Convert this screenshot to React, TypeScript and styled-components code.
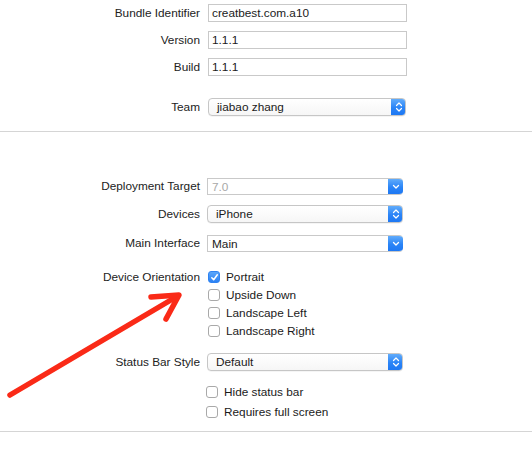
import React from "react";
import styled, { createGlobalStyle } from "styled-components";

const Global = createGlobalStyle`
  html, body { margin: 0; padding: 0; background: #ffffff; }
  body { font-family: "Liberation Sans", Arial, sans-serif; font-size: 11.8px; color: #262626; }
`;

const Page = styled.div`
  position: relative;
  width: 532px;
  height: 451px;
  overflow: hidden;
  background: #fff;
  display: flex;
  flex-direction: column;
`;

const Row = styled.div<{ $mt: number; $h?: number; $indent?: number }>`
  display: flex;
  align-items: flex-start;
  margin-top: ${(p) => p.$mt}px;
  min-height: ${(p) => p.$h ?? 18}px;
  & > *:nth-child(2) { margin-left: ${(p) => p.$indent ?? 8}px; }
`;

const Label = styled.div<{ $h?: number }>`
  width: 200px;
  flex: none;
  text-align: right;
  line-height: ${(p) => p.$h ?? 18}px;
  font-size: 11.8px;
  color: #222222;
  white-space: nowrap;
`;

const Spacer = styled.div`
  width: 200px;
  flex: none;
`;

const TextField = styled.div<{ $w: number }>`
  box-sizing: border-box;
  width: ${(p) => p.$w}px;
  height: 18px;
  border: 1px solid #c9c9c9;
  background: #fff;
  padding-left: 3px;
  line-height: 16px;
  font-size: 11.8px;
  color: #1a1a1a;
`;

const Popup = styled.div<{ $w: number }>`
  box-sizing: border-box;
  width: ${(p) => p.$w}px;
  height: 18px;
  border: 1px solid #c6c6c6;
  border-radius: 4px;
  background: linear-gradient(#ffffff, #f6f6f6);
  display: flex;
  align-items: stretch;
  overflow: hidden;
  box-shadow: 0 0.5px 0.5px rgba(0,0,0,0.08);
`;

const PopupText = styled.div<{ $pad?: number; $dim?: boolean }>`
  flex: 1;
  padding-left: ${(p) => p.$pad ?? 8}px;
  line-height: 16px;
  font-size: 11.8px;
  color: ${(p) => (p.$dim ? "#a8a8a8" : "#1a1a1a")};
`;

const BlueCap = styled.div<{ $w: number }>`
  width: ${(p) => p.$w}px;
  flex: none;
  margin: -1px -1px -1px 0;
  background: linear-gradient(#67b0fb, #2a84f7 55%, #1c76f2);
  display: flex;
  align-items: center;
  justify-content: center;
`;

const Combo = styled.div<{ $w: number }>`
  box-sizing: border-box;
  width: ${(p) => p.$w}px;
  height: 17px;
  border: 1px solid #c9c9c9;
  border-right: none;
  border-radius: 0 4px 4px 0;
  background: #fff;
  display: flex;
  align-items: stretch;
  overflow: hidden;
`;

const Divider = styled.div<{ $mt: number }>`
  margin-top: ${(p) => p.$mt}px;
  height: 1px;
  background: #d5d5d5;
  flex: none;
`;

const CheckList = styled.div<{ $rowH: number }>`
  display: flex;
  flex-direction: column;
  & > * { height: ${(p) => p.$rowH}px; }
`;

const CheckRow = styled.label`
  display: flex;
  align-items: center;
  gap: 6px;
  font-size: 11.8px;
  color: #1a1a1a;
`;

const Box = styled.span<{ $on?: boolean }>`
  box-sizing: border-box;
  width: 12px;
  height: 12px;
  border-radius: 3px;
  border: 1px solid ${(p) => (p.$on ? "#2f83f2" : "#a9a9a9")};
  background: ${(p) => (p.$on ? "linear-gradient(#5aa6fa, #2b81f3)" : "#fff")};
  display: flex;
  align-items: center;
  justify-content: center;
  flex: none;
`;

const ArrowLayer = styled.svg`
  position: absolute;
  left: 0;
  top: 0;
  pointer-events: none;
`;

const UpDown = () => (
  <svg width="8" height="12" viewBox="0 0 8 12">
    <path d="M1.5 4.5 L4 2 L6.5 4.5 M1.5 7.5 L4 10 L6.5 7.5" fill="none" stroke="#fff" strokeWidth="1.2" strokeLinecap="round" strokeLinejoin="round" />
  </svg>
);

const Down = () => (
  <svg width="8" height="6" viewBox="0 0 8 6">
    <path d="M1.5 1.5 L4 4 L6.5 1.5" fill="none" stroke="#fff" strokeWidth="1.3" strokeLinecap="round" strokeLinejoin="round" />
  </svg>
);

const Check = () => (
  <svg width="9" height="9" viewBox="0 0 9 9">
    <path d="M1.8 4.8 L3.7 6.8 L7.3 1.8" fill="none" stroke="#fff" strokeWidth="1.5" strokeLinecap="round" strokeLinejoin="round" />
  </svg>
);

const Cb = ({ on, children }: { on?: boolean; children: React.ReactNode }) => (
  <CheckRow>
    <Box $on={on}>{on && <Check />}</Box>
    {children}
  </CheckRow>
);

export default function App() {
  return (
    <Page>
      <Global />
      <Row $mt={4}>
        <Label>Bundle Identifier</Label>
        <TextField $w={199}>creatbest.com.a10</TextField>
      </Row>
      <Row $mt={9}>
        <Label>Version</Label>
        <TextField $w={199}>1.1.1</TextField>
      </Row>
      <Row $mt={9}>
        <Label>Build</Label>
        <TextField $w={199}>1.1.1</TextField>
      </Row>
      <Row $mt={22}>
        <Label>Team</Label>
        <Popup $w={198}>
          <PopupText>jiabao zhang</PopupText>
          <BlueCap $w={15}><UpDown /></BlueCap>
        </Popup>
      </Row>
      <Divider $mt={15} />
      <Row $mt={46} $h={17} $indent={7}>
        <Label $h={17}>Deployment Target</Label>
        <Combo $w={196}>
          <PopupText $pad={4} $dim>7.0</PopupText>
          <BlueCap $w={16}><Down /></BlueCap>
        </Combo>
      </Row>
      <Row $mt={10} $indent={7}>
        <Label>Devices</Label>
        <Popup $w={196}>
          <PopupText>iPhone</PopupText>
          <BlueCap $w={15}><UpDown /></BlueCap>
        </Popup>
      </Row>
      <Row $mt={12} $h={17} $indent={7}>
        <Label $h={17}>Main Interface</Label>
        <Combo $w={196}>
          <PopupText $pad={4}>Main</PopupText>
          <BlueCap $w={16}><Down /></BlueCap>
        </Combo>
      </Row>
      <Row $mt={16} $indent={8}>
        <Label>Device Orientation</Label>
        <CheckList $rowH={18}>
          <Cb on>Portrait</Cb>
          <Cb>Upside Down</Cb>
          <Cb>Landscape Left</Cb>
          <Cb>Landscape Right</Cb>
        </CheckList>
      </Row>
      <Row $mt={13} $indent={7}>
        <Label>Status Bar Style</Label>
        <Popup $w={196}>
          <PopupText>Default</PopupText>
          <BlueCap $w={15}><UpDown /></BlueCap>
        </Popup>
      </Row>
      <Row $mt={11} $indent={6}>
        <Spacer />
        <CheckList $rowH={20}>
          <Cb>Hide status bar</Cb>
          <Cb>Requires full screen</Cb>
        </CheckList>
      </Row>
      <Divider $mt={9} />
      <ArrowLayer width="532" height="451" viewBox="0 0 532 451">
        <g fill="none" stroke="#fa2a17" strokeWidth="5.5" strokeLinecap="round" strokeLinejoin="round">
          <path d="M10 395 L176 297" />
          <path d="M151 297 L179 295 L166 319" />
        </g>
      </ArrowLayer>
    </Page>
  );
}
